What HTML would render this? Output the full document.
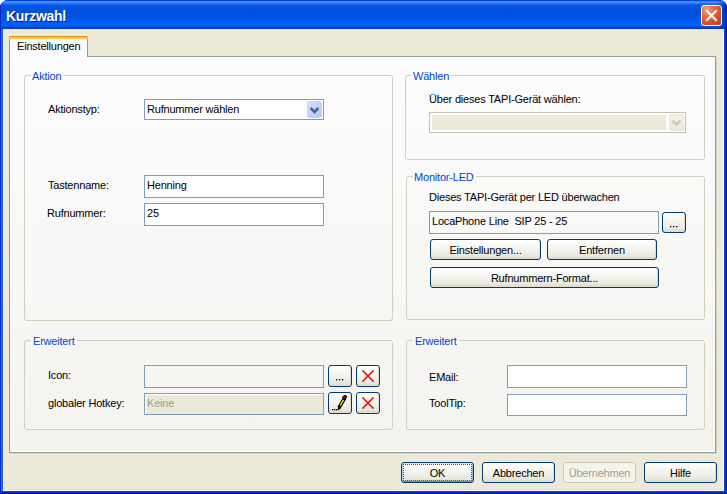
<!DOCTYPE html>
<html><head><meta charset="utf-8">
<style>
*{box-sizing:border-box;margin:0;padding:0}
html,body{width:727px;height:494px;overflow:hidden;background:#fff}
body{font-family:"Liberation Sans",sans-serif;font-size:11px;line-height:13px;color:#000;position:relative;letter-spacing:-0.2px}
.a{position:absolute}
#frame{left:0;top:0;width:727px;height:494px;border-radius:8px 8px 0 0;
 background:linear-gradient(to right,#0627cc 0px,#0627cc 1px,#2a72f6 1px,#2a72f6 2px,#1258ee 2px,#1258ee 3px,#0847e6 3px,#0847e6 724px,#0a44e0 724px,#0a44e0 725px,#0030c0 725px,#0030c0 726px,#001a98 726px)}
#tleft{left:0;top:0;width:10px;height:29px;border-top-left-radius:8px;background:linear-gradient(to right,rgba(0,25,170,0.75) 0px,rgba(0,25,170,0.75) 1px,rgba(40,110,250,0.35) 1px,rgba(40,110,250,0.35) 2px,rgba(0,40,200,0.1) 2px,rgba(0,40,200,0) 4px,rgba(0,40,200,0) 10px)}
#fbot{left:0;top:491px;width:727px;height:3px;background:linear-gradient(to bottom,#0b45e0 0px,#0b45e0 1px,#0628c0 1px,#0628c0 2px,#001890 2px)}
#tright{left:717px;top:0;width:10px;height:29px;border-top-right-radius:8px;background:linear-gradient(to right,rgba(0,40,180,0) 0px,rgba(0,40,180,0.25) 4px,rgba(0,30,160,0.55) 7px,rgba(0,20,140,0.8) 10px)}
#title{left:0;top:0;width:727px;height:29px;border-radius:8px 8px 0 0;
 background:linear-gradient(to bottom,#0040d0 0px,#0040d0 1px,#3b8cff 1px,#3a8cff 3px,#1468f0 4px,#0658e6 5px,#0353e2 7px,#0050de 12px,#0052e2 17px,#005af0 20px,#0062fa 24px,#005ef6 26px,#0048d6 27px,#0036bc 29px)}
#ttext{left:6px;top:8px;font-weight:bold;font-size:14px;line-height:16px;color:#fff;text-shadow:1px 1px 0 #0a1c7a;letter-spacing:-0.3px}
#close{left:701px;top:5px;width:21px;height:21px;border:1px solid #fff;border-radius:3px;
 background:radial-gradient(circle at 25% 20%,#f0a088 0%,#e5704e 30%,#dc5028 60%,#c83c18 100%)}
#client{left:3px;top:29px;width:721px;height:462px;background:#ece9d8;border-left:1px solid #f6f4e8;border-bottom:1px solid #fbf8ec;border-right:1px solid #fbf8ec}
#tabpage{left:9px;top:56px;width:707px;height:397px;border:1px solid #919b9c;
 background:linear-gradient(to bottom,#fcfcfe 0%,#f4f3ee 100%);box-shadow:inset -1px -1px 0 #fff,1px 1px 0 #d6d3c4}
#tab{left:9px;top:37px;width:79px;height:20px;border-left:1px solid #919b9c;border-right:1px solid #919b9c;background:#fcfcfe}
#tabtop{left:9px;top:36px;width:79px;height:3px;background:#ffc83c;border-top:1px solid #e68b2c;border-radius:2px 2px 0 0}
.grp{border:1px solid #d0d0bf;border-radius:3px}
.gl{color:#0046d5;padding:0 2px 0 1px}
.lbl{white-space:nowrap;margin-left:-1px}
.tb{border:1px solid #7f9db9}
.btn{border:1px solid #003c74;border-radius:3px;text-align:center;line-height:17px;padding-top:2px;
 background:linear-gradient(to bottom,#ffffff 0%,#f7f7f4 30%,#f0f0ea 60%,#e8e6dc 85%,#d9d3c8 100%);
 box-shadow:inset -1px -1px 0 #e3ddd0}
.dd{background:linear-gradient(135deg,#dae5fd 0%,#c3d4fa 40%,#b4c9f7 100%);border-radius:2px;border:1px solid #c4d3f4}
</style></head><body>
<div id="frame" class="a"></div>
<div id="title" class="a"></div>
<div id="tright" class="a"></div>
<div id="tleft" class="a"></div>
<div id="fbot" class="a"></div>
<div id="ttext" class="a">Kurzwahl</div>
<div id="close" class="a"><svg width="19" height="19" style="position:absolute;left:0;top:0"><path d="M5 5 L14 14 M14 5 L5 14" stroke="#fff" stroke-width="2.2" stroke-linecap="square"/></svg></div>
<div id="client" class="a"></div>
<div id="tabpage" class="a"></div>
<div id="tab" class="a"></div>
<div id="tabtop" class="a"></div>
<div class="a lbl" style="left:18px;top:40px">Einstellungen</div>

<!-- Aktion group -->
<div class="a grp" style="left:24px;top:75px;width:369px;height:246px"></div>
<div class="a gl lbl" style="left:32px;top:70px;background:#fbfbfc">Aktion</div>
<div class="a lbl" style="left:49px;top:103px">Aktionstyp:</div>
<div class="a tb" style="left:144px;top:99px;width:180px;height:21px;background:#fff"></div>
<div class="a lbl" style="left:148px;top:103px">Rufnummer wählen</div>
<div class="a dd" style="left:307px;top:101px;width:15px;height:17px"></div>
<svg class="a" style="left:307px;top:101px" width="15" height="17"><path d="M3.6 7 L7.5 10.9 L11.4 7" stroke="#4d6185" stroke-width="2.5" fill="none"/></svg>
<div class="a lbl" style="left:49px;top:179px">Tastenname:</div>
<div class="a tb" style="left:144px;top:175px;width:180px;height:23px;background:#fff"></div>
<div class="a lbl" style="left:148px;top:179px">Henning</div>
<div class="a lbl" style="left:48px;top:207px">Rufnummer:</div>
<div class="a tb" style="left:144px;top:203px;width:180px;height:23px;background:#fff"></div>
<div class="a lbl" style="left:148px;top:207px">25</div>

<!-- Wählen group -->
<div class="a grp" style="left:405px;top:75px;width:300px;height:85px"></div>
<div class="a gl lbl" style="left:413px;top:70px;background:#fbfbfc">Wählen</div>
<div class="a lbl" style="left:430px;top:93px">Über dieses TAPI-Gerät wählen:</div>
<div class="a" style="left:429px;top:112px;width:257px;height:21px;border:1px solid #c2c0b0;background:#fff"></div>
<div class="a" style="left:432px;top:115px;width:234px;height:15px;background:#ece9d8"></div>
<div class="a" style="left:669px;top:114px;width:15px;height:17px;border-radius:2px;background:linear-gradient(to bottom,#f2f1ea,#e9e7de);border:1px solid #e8e6dc"></div>
<svg class="a" style="left:669px;top:114px" width="15" height="17"><path d="M3.5 6.5 L7.5 10.5 L11.5 6.5" stroke="#c9c7ba" stroke-width="2.4" fill="none"/></svg>

<!-- Monitor-LED -->
<div class="a grp" style="left:406px;top:176px;width:299px;height:144px"></div>
<div class="a gl lbl" style="left:414px;top:171px;background:#f9f9f8">Monitor-LED</div>
<div class="a lbl" style="left:430px;top:191px">Dieses TAPI-Gerät per LED überwachen</div>
<div class="a tb" style="left:429px;top:211px;width:230px;height:23px"></div>
<div class="a lbl" style="left:433px;top:215px">LocaPhone Line&nbsp; SIP 25 - 25</div>
<div class="a btn" style="left:662px;top:212px;width:24px;height:21px"></div>
<svg class="a" style="left:662px;top:212px" width="24" height="21"><rect x="8" y="14" width="1.3" height="1.3" fill="#000"/><rect x="11" y="14" width="1.3" height="1.3" fill="#000"/><rect x="14" y="14" width="1.3" height="1.3" fill="#000"/></svg>
<div class="a btn" style="left:430px;top:239px;width:111px;height:21px">Einstellungen...</div>
<div class="a btn" style="left:547px;top:239px;width:110px;height:21px">Entfernen</div>
<div class="a btn" style="left:430px;top:267px;width:229px;height:21px">Rufnummern-Format...</div>

<!-- Erweitert left -->
<div class="a grp" style="left:24px;top:340px;width:369px;height:90px"></div>
<div class="a gl lbl" style="left:32px;top:335px;padding-left:2px;background:#f7f6f3">Erweitert</div>
<div class="a lbl" style="left:49px;top:369px">Icon:</div>
<div class="a tb" style="left:144px;top:365px;width:180px;height:23px"></div>
<div class="a btn" style="left:328px;top:365px;width:24px;height:22px"></div>
<svg class="a" style="left:328px;top:365px" width="24" height="22"><rect x="8" y="14" width="1.3" height="1.3" fill="#000"/><rect x="11" y="14" width="1.3" height="1.3" fill="#000"/><rect x="14" y="14" width="1.3" height="1.3" fill="#000"/></svg>
<div class="a btn" style="left:356px;top:365px;width:24px;height:22px"></div>
<svg class="a" style="left:356px;top:365px" width="24" height="22"><path d="M6.8 5.8 L17.2 16.2 M17.2 5.8 L6.8 16.2" stroke="#ee0000" stroke-width="1.5"/><g fill="#5a6a6a" opacity="0.8"><rect x="6" y="5" width="1.3" height="1.3"/><rect x="16.7" y="5" width="1.3" height="1.3"/><rect x="6" y="15.7" width="1.3" height="1.3"/><rect x="16.7" y="15.7" width="1.3" height="1.3"/></g><rect x="11" y="10" width="2" height="2" fill="#f00"/></svg>
<div class="a lbl" style="left:49px;top:397px">globaler Hotkey:</div>
<div class="a tb" style="left:144px;top:393px;width:180px;height:22px;background:#fff"></div>
<div class="a" style="left:146px;top:395px;width:177px;height:19px;background:#ece9d8"></div>
<div class="a lbl" style="left:148px;top:397px;color:#a19e8e">Keine</div>
<div class="a btn" style="left:328px;top:392px;width:24px;height:22px"></div>
<svg class="a" style="left:328px;top:392px" width="24" height="22">
<rect x="4" y="17" width="1.3" height="1.3" fill="#000"/><rect x="6" y="17" width="1.3" height="1.3" fill="#000"/><rect x="8" y="17" width="1.3" height="1.3" fill="#000"/>
<path d="M11.2 15.2 L16.6 6.4" stroke="#000" stroke-width="3.6"/>
<path d="M12.2 13.6 L15.6 7.8" stroke="#ffff00" stroke-width="1.3"/>
<path d="M9.8 18.6 L9.9 14 L13.4 16 Z" fill="#000"/>
<path d="M14.6 4.2 L17.2 2.8 L19.2 4.6 L17.6 8 L14.2 6.4 Z" fill="#000"/>
<rect x="15.2" y="3.8" width="2.8" height="2.8" fill="#8a0000"/>
</svg>
<div class="a btn" style="left:356px;top:392px;width:24px;height:22px"></div>
<svg class="a" style="left:356px;top:392px" width="24" height="22"><path d="M6.8 5.8 L17.2 16.2 M17.2 5.8 L6.8 16.2" stroke="#ee0000" stroke-width="1.5"/><g fill="#5a6a6a" opacity="0.8"><rect x="6" y="5" width="1.3" height="1.3"/><rect x="16.7" y="5" width="1.3" height="1.3"/><rect x="6" y="15.7" width="1.3" height="1.3"/><rect x="16.7" y="15.7" width="1.3" height="1.3"/></g><rect x="11" y="10" width="2" height="2" fill="#f00"/></svg>

<!-- Erweitert right -->
<div class="a grp" style="left:406px;top:340px;width:299px;height:90px"></div>
<div class="a gl lbl" style="left:414px;top:335px;padding-left:2px;background:#f7f6f3">Erweitert</div>
<div class="a lbl" style="left:430px;top:371px">EMail:</div>
<div class="a tb" style="left:507px;top:365px;width:180px;height:23px;background:#fff"></div>
<div class="a lbl" style="left:430px;top:397px">ToolTip:</div>
<div class="a tb" style="left:507px;top:394px;width:180px;height:22px;background:#fff"></div>

<!-- bottom buttons -->
<div class="a btn" style="left:401px;top:462px;width:73px;height:21px;box-shadow:inset 0 1px 0 #cee7ff,inset 1px 0 0 #bcd4f6,inset -1px 0 0 #89ade4,inset 0 -1px 0 #6982ee">
 <div class="a" style="left:1px;top:1px;right:1px;bottom:1px;border:1px dotted #5a4a30"></div>OK</div>
<div class="a btn" style="left:482px;top:462px;width:73px;height:21px">Abbrechen</div>
<div class="a btn" style="left:563px;top:462px;width:73px;height:21px;border-color:#c9c7ba;background:#f5f4ea;color:#a19e8e;box-shadow:none">Übernehmen</div>
<div class="a btn" style="left:644px;top:462px;width:73px;height:21px">Hilfe</div>
</body></html>
